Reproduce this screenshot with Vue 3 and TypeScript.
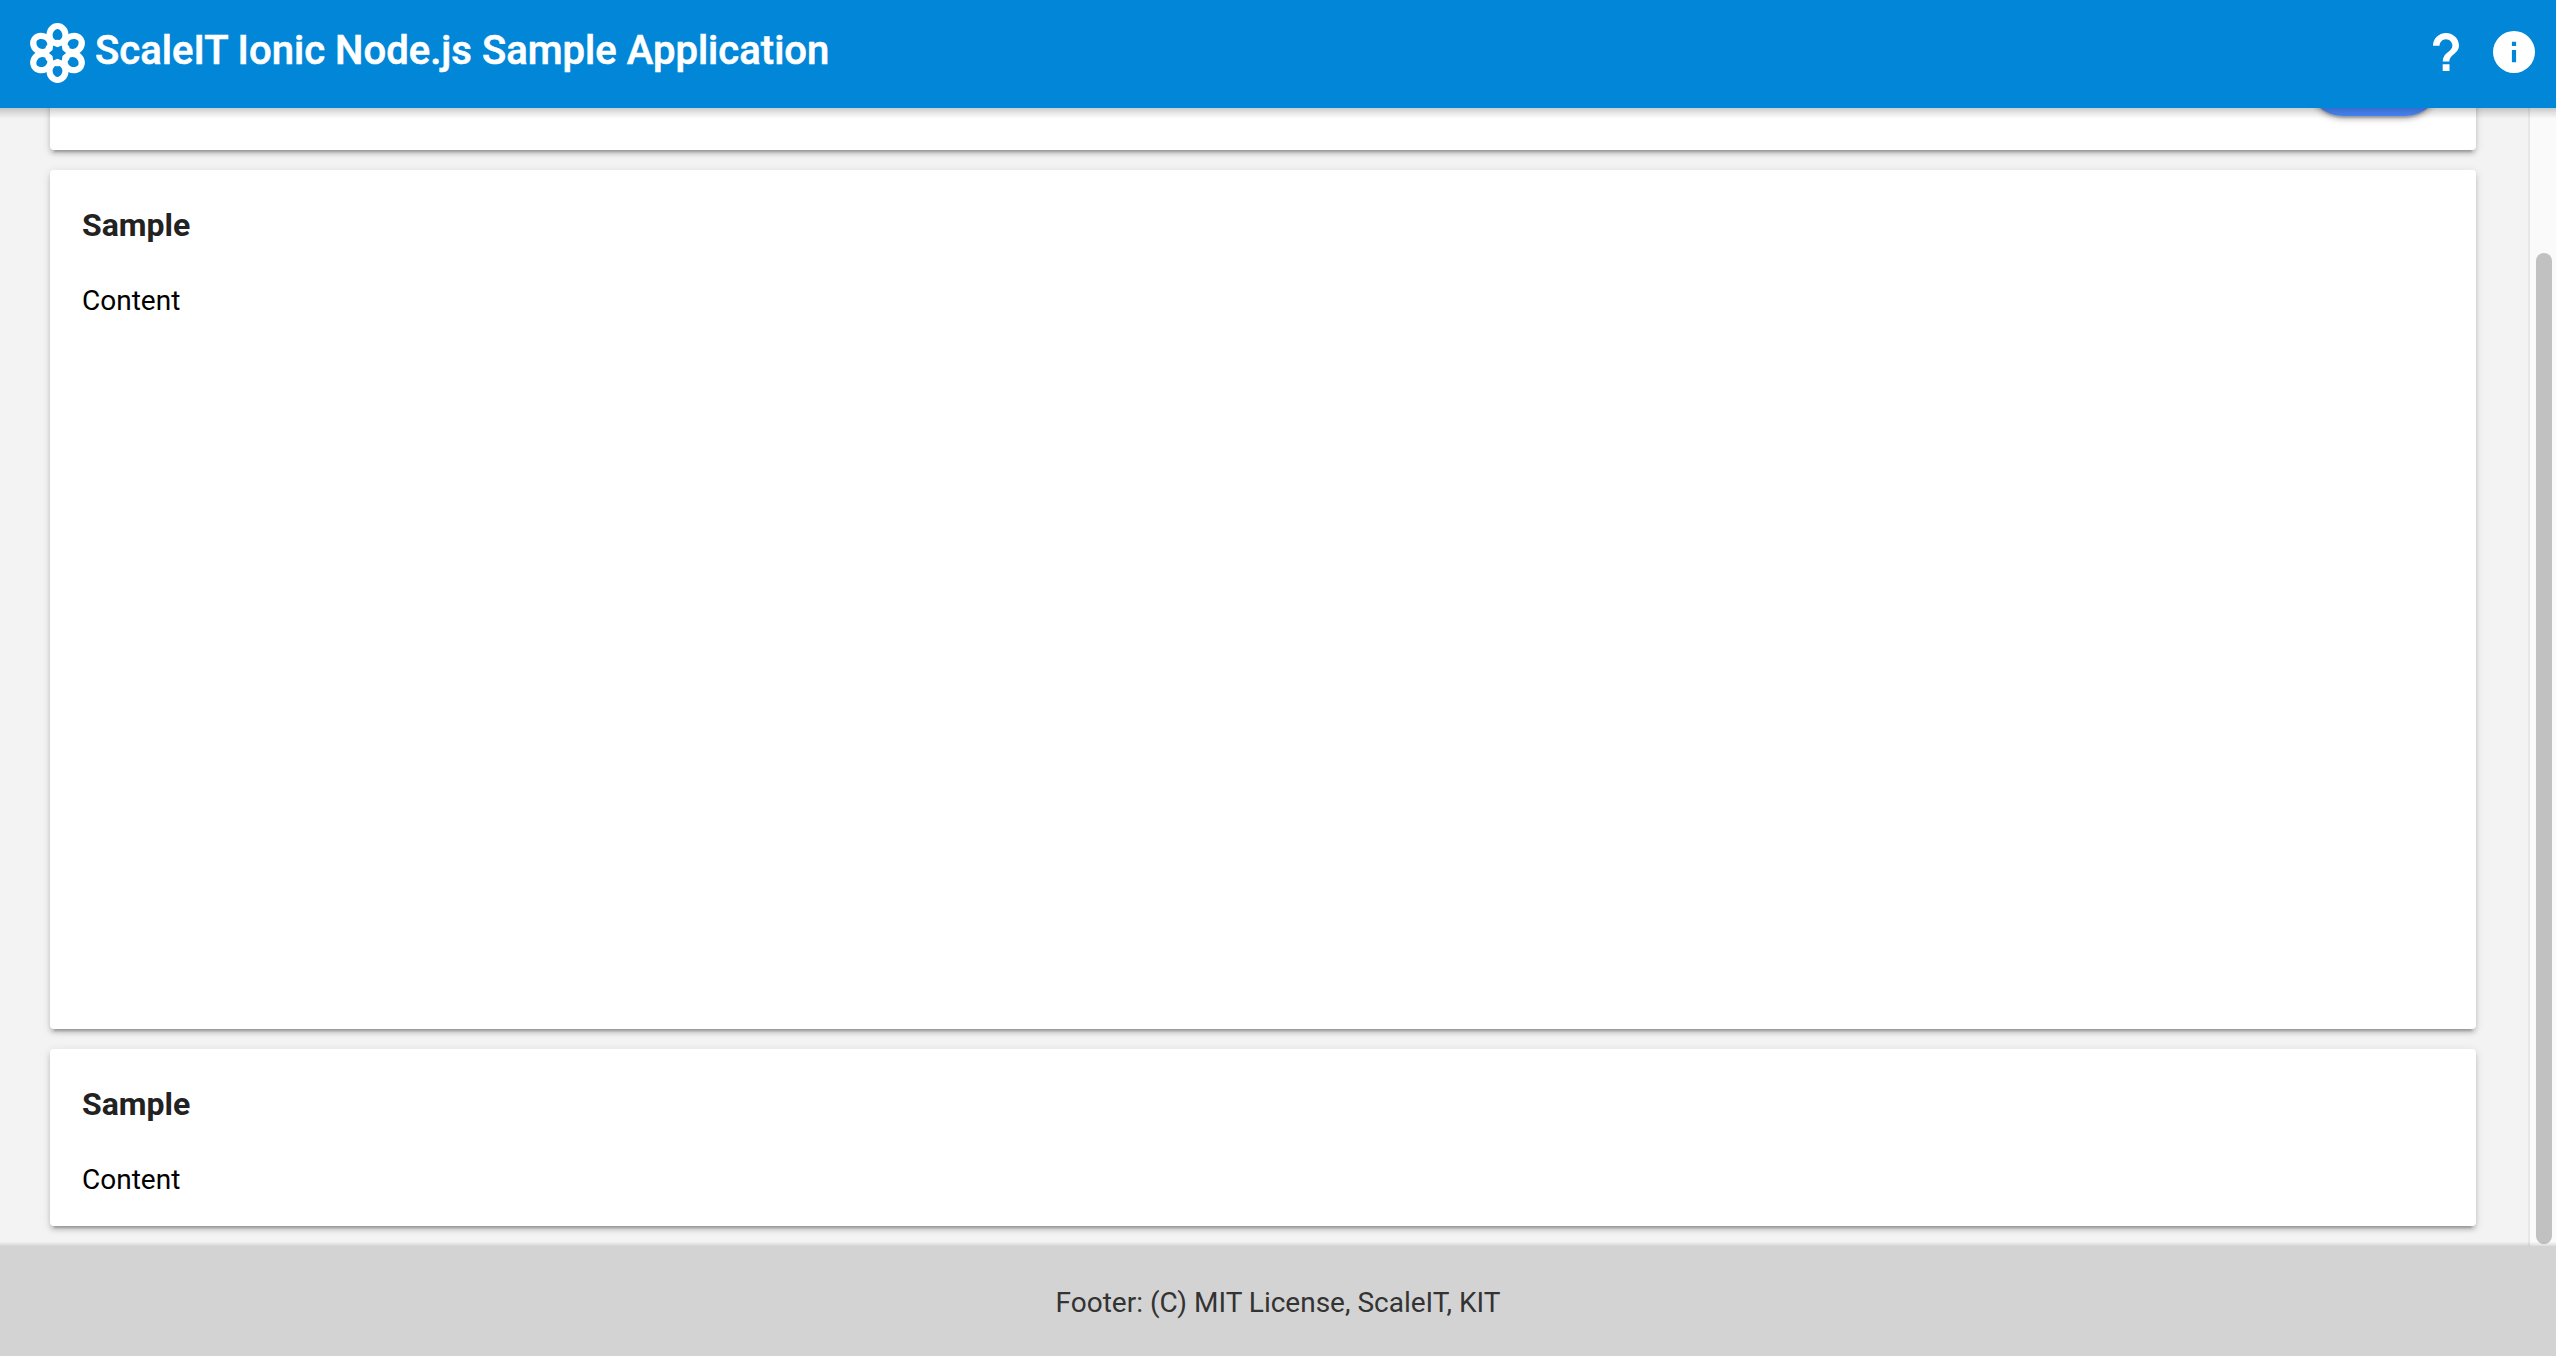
<script setup lang="ts">
interface Card {
  title: string
  body: string
  size: string
}

const cards: Card[] = [
  { title: 'Sample', body: 'Content', size: 'tall' },
  { title: 'Sample', body: 'Content', size: 'short' },
]
const angles: number[] = [0, 60, 120, 180, 240, 300]
</script>

<template>
  <div class="app">
    <header class="header">
      <svg class="logo" viewBox="-30.500 -30 60 60">
        <g v-for="a in angles" :key="a" :transform="`rotate(${a})`">
          <ellipse cx="0" cy="-18.2" rx="11" ry="11.8" fill="#fff" />
        </g>
        <circle r="15" fill="#fff" />
        <g v-for="a in angles" :key="'h' + a" :transform="`rotate(${a})`" fill="#0286d8">
          <path d="M0-24C3-23.5 4.900-20.5 4.900-17.8C4.900-15.500 3.600-13.800 2-12.900Q0-13.800-2-12.900C-3.600-13.800-4.900-15.500-4.900-17.8C-4.900-20.5-3-23.5 0-24Z" />
        </g>
        <path fill="#0286d8" d="M8.6 0L5-2.9L4.3-7.5L0-5.8L-4.3-7.5L-5-2.9L-8.6 0L-5 2.9L-4.3 7.5L0 5.8L4.3 7.5L5 2.9Z" />
      </svg>
      <h1 class="title">ScaleIT Ionic Node.js Sample Application</h1>
      <svg class="help" viewBox="0 0 26 38" fill="#fff">
        <path d="M9.7 31.3h6.8V38H9.7zM13 0C5.8 0 0 5.7 0 12.7h6.6C6.6 9.200 9.500 6.300 13 6.300s6.400 2.900 6.400 6.400c0 6.300-9.700 6.500-9.700 15.700h6.600c0-6.500 9.700-8.200 9.700-15.700C26 5.700 20.200 0 13 0z" />
      </svg>
      <svg class="info" viewBox="0 0 42 42" fill="#fff">
        <path fill-rule="evenodd" d="M21 0a21 21 0 1 0 0 42a21 21 0 1 0 0-42zM18.900 10.700h4.200v4.200h-4.200zM18.900 18.900h4.200v12.400h-4.200z" />
      </svg>
    </header>
    <main class="main">
      <div class="content">
        <section class="card first">
          <button class="action" type="button" aria-label="Action"></button>
        </section>
        <section v-for="(card, i) in cards" :key="i" class="card" :class="card.size">
          <h2 class="card-title">{{ card.title }}</h2>
          <p class="card-body">{{ card.body }}</p>
        </section>
      </div>
      <div class="track"><div class="thumb"></div></div>
    </main>
    <footer class="footer">Footer: (C) MIT License, ScaleIT, KIT</footer>
  </div>
</template>

<style>
body {
  margin: 0;
  overflow: hidden;
}
</style>

<style scoped>
.app {
  display: flex;
  flex-direction: column;
  width: 2556px;
  height: 1356px;
  overflow: hidden;
  background: #f3f3f3;
  font-family: Roboto, sans-serif;
}
.header {
  display: flex;
  position: relative;
  z-index: 2;
  flex: none;
  box-sizing: border-box;
  height: 108px;
  padding: 0 20px 0 27px;
  background: #0286d8;
}
/* soft edge the bar casts on the scrolled content */
.header::after {
  content: '';
  position: absolute;
  top: 100%;
  left: 0;
  right: 0;
  height: 10px;
  background: linear-gradient(rgba(0, 0, 0, 0.2), rgba(0, 0, 0, 0.1) 45%, rgba(0, 0, 0, 0.01));
}
.logo {
  width: 60px;
  height: 60px;
  margin-top: 23px;
}
.title {
  flex: 1;
  margin: 0 0 0 8px;
  padding-top: 27px;
  color: #fff;
  font-size: 40px;
  font-weight: 500;
  line-height: 48px;
  letter-spacing: 0.02px;
  white-space: nowrap;
  -webkit-text-stroke: 0.6px #fff;
}
.help {
  width: 26px;
  height: 38px;
  margin: 33px 34px 0 0;
}
.info {
  width: 42px;
  height: 42px;
  margin: 31px 1px 0 0;
}
.main {
  display: flex;
  flex: none;
  height: 1138px;
}
.content {
  display: flex;
  flex-direction: column;
  gap: 20px;
  flex: 1;
  padding: 0 52px 0 50px;
}
.card {
  box-sizing: border-box;
  flex: none;
  padding: 36px 32px 0;
  border-radius: 4px;
  background: #fff;
  box-shadow: 0 4px 4px rgba(0, 0, 0, 0.14), 0 6px 2px -4px rgba(0, 0, 0, 0.2), 0 2px 10px rgba(0, 0, 0, 0.12);
}
.first {
  display: flex;
  justify-content: flex-end;
  align-items: flex-start;
  height: 62px;
  margin-top: -20px;
  padding: 0 35px 0 0;
}
.tall {
  height: 859px;
}
.short {
  height: 177px;
}
.card-title {
  margin: 0;
  color: #222;
  font-size: 32px;
  font-weight: 700;
  line-height: 38px;
}
.card-body {
  margin: 40px 0 0;
  color: #000;
  font-size: 28px;
  line-height: 34px;
}
.action {
  width: 134px;
  height: 72px;
  margin-top: -44px;
  padding: 0;
  border: 0;
  border-radius: 36px;
  background: #4787fc;
  box-shadow: 0 4px 4px rgba(0, 0, 0, 0.14), 0 6px 2px -4px rgba(0, 0, 0, 0.2), 0 2px 10px rgba(0, 0, 0, 0.12);
}
.track {
  display: flex;
  flex: none;
  justify-content: flex-end;
  align-items: flex-end;
  box-sizing: border-box;
  width: 28px;
  padding: 0 4px 2px 0;
  border-left: 2px solid #e7e7e7;
  background: #fafafa;
}
.thumb {
  width: 16px;
  height: 991px;
  border-radius: 8px;
  background: #c1c1c1;
}
.footer {
  position: relative;
  flex: 1;
  padding-top: 40px;
  background: #d3d3d3;
  color: #333;
  font-size: 28px;
  line-height: 34px;
  text-align: center;
}
.footer::before {
  content: '';
  position: absolute;
  bottom: 100%;
  left: 0;
  right: 0;
  height: 4px;
  background: linear-gradient(rgba(0, 0, 0, 0.01), rgba(0, 0, 0, 0.12));
}
</style>
